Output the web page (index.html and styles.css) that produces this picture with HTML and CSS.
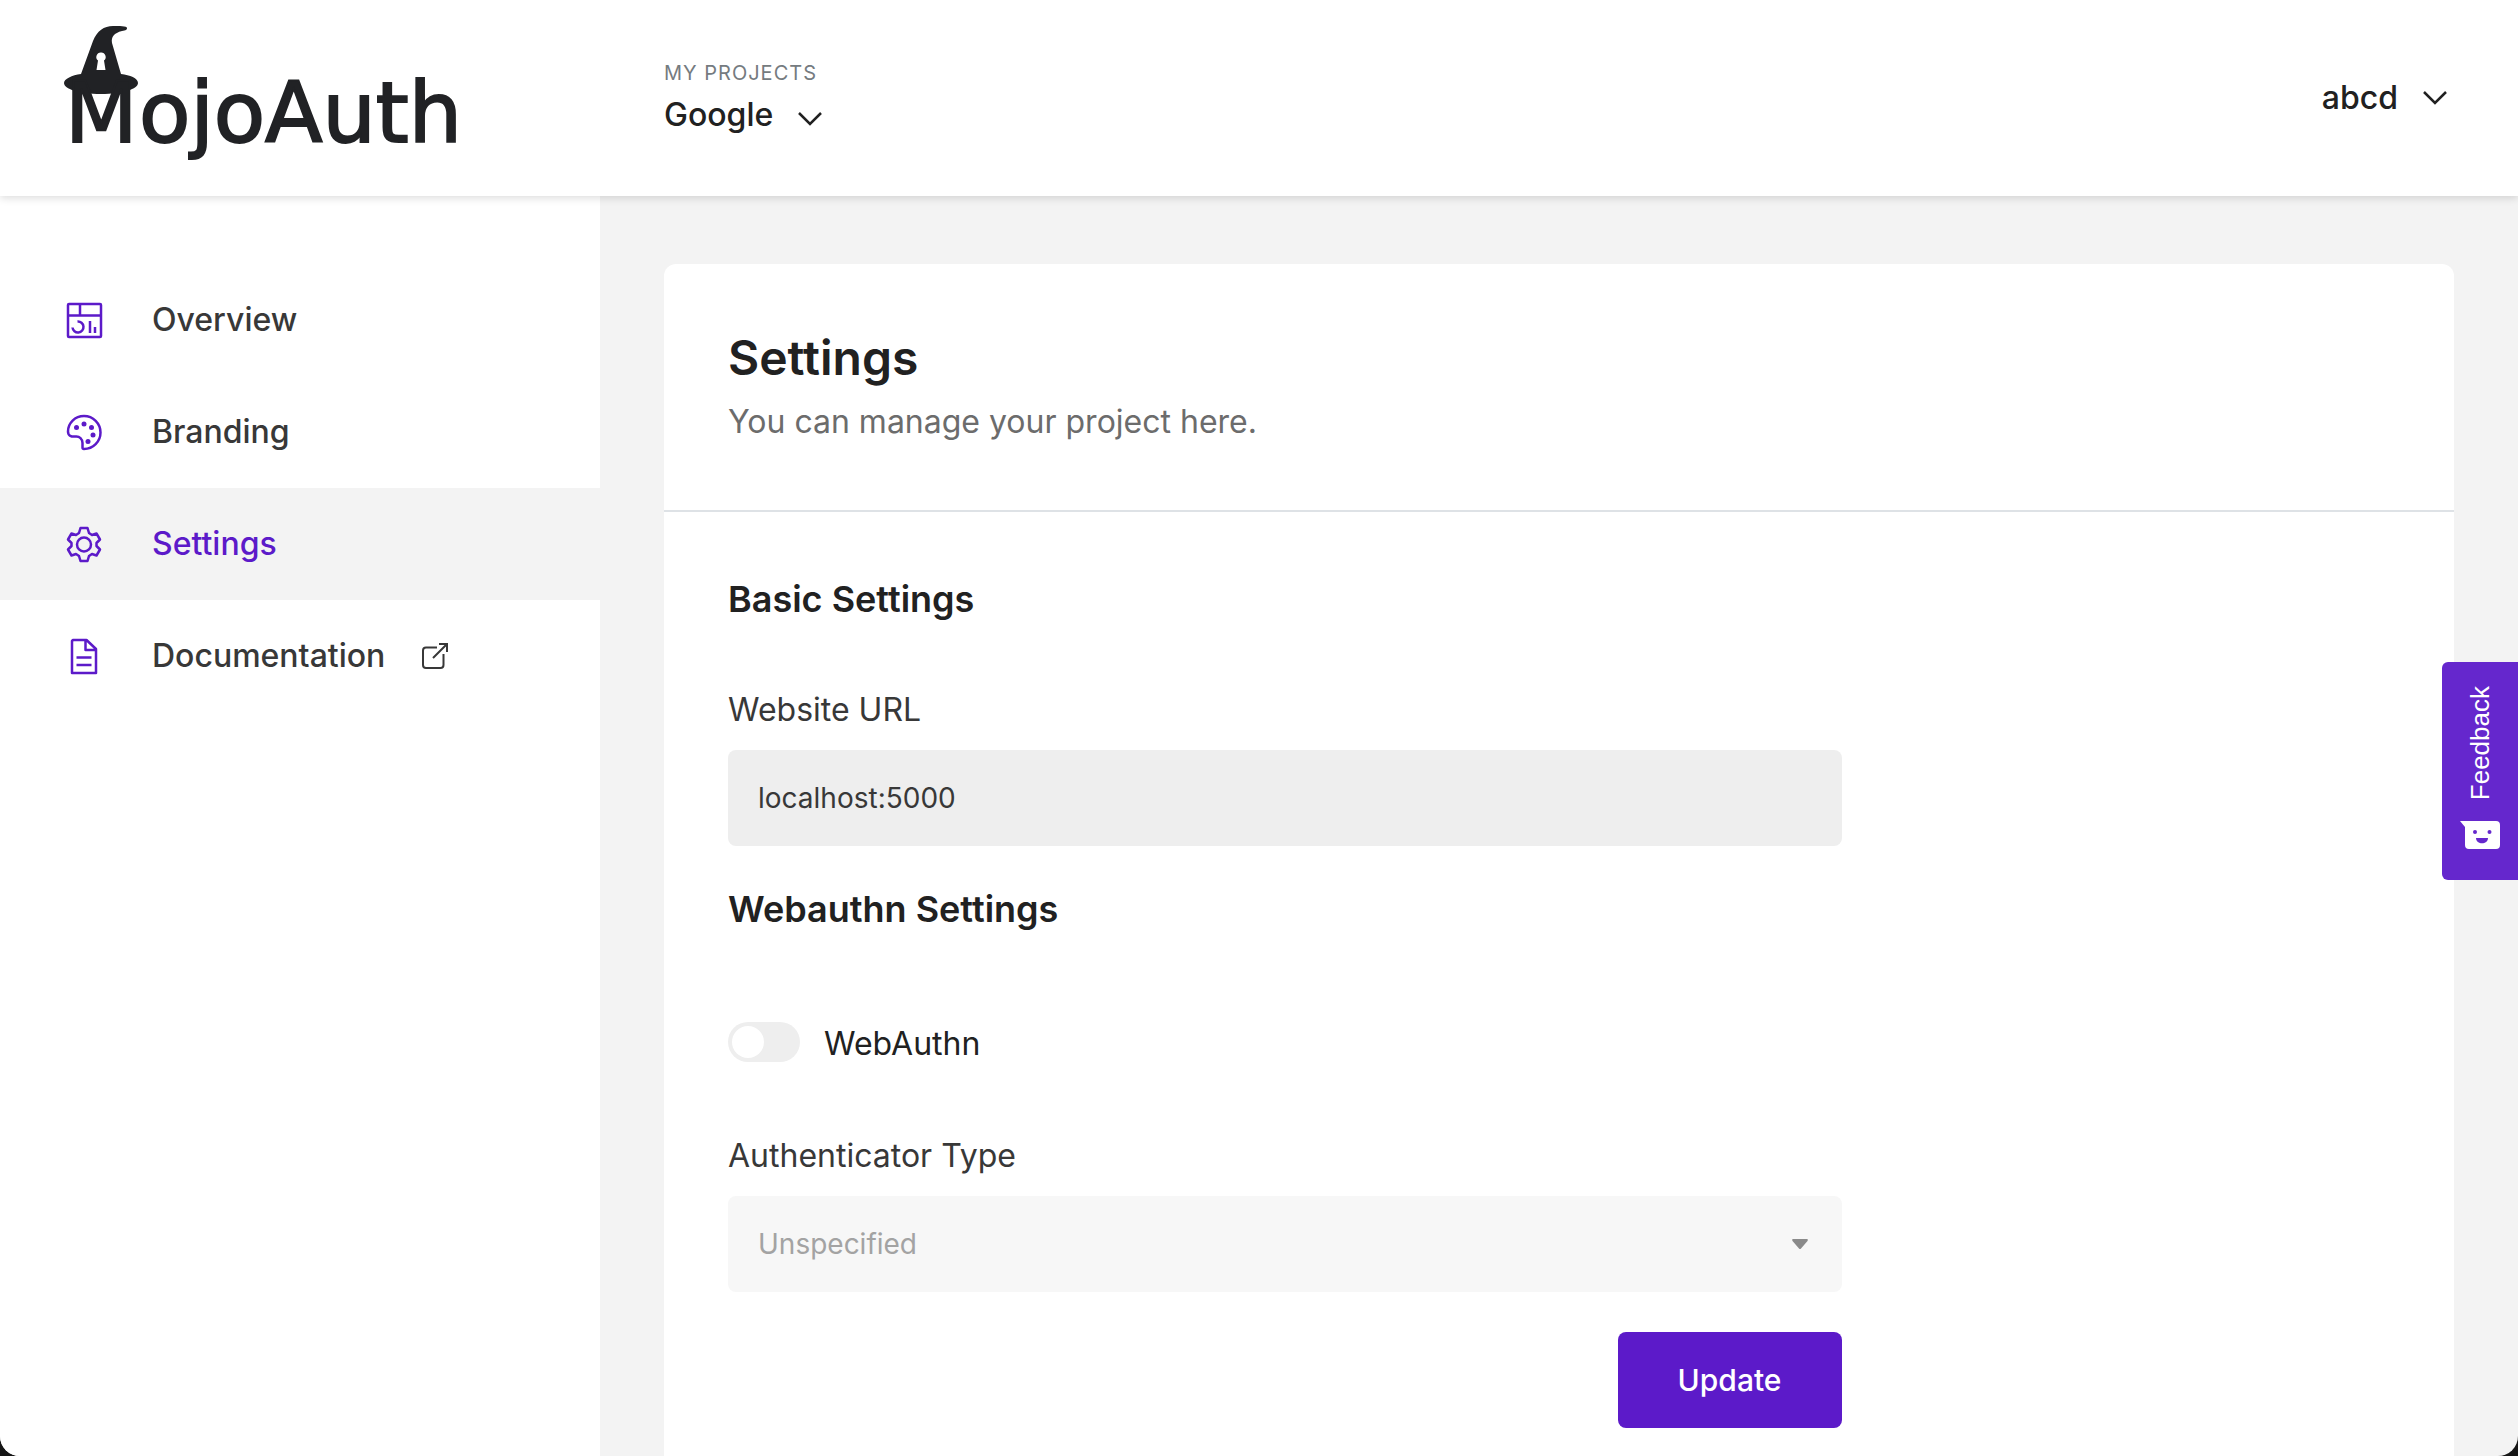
FILE: index.html
```html
<!DOCTYPE html>
<html lang="en">
<head>
<meta charset="utf-8">
<meta name="viewport" content="width=device-width, initial-scale=1">
<title>Settings - MojoAuth</title>
<link rel="stylesheet" href="styles.css">
</head>
<body>
<div class="app">
  <header class="topbar">
    <a class="logo" href="#" aria-label="MojoAuth">
      <svg width="420" height="144" viewBox="0 0 420 144" fill="currentColor">
        <path d="M17 48 29 15C33 5 40 0 49 0c6 0 14 0 14 2s-1 2-5 3c-8 2-11 6-10 12l9 31c9 1 17 4 17 9 0 6-15 11-37 11S0 63 0 57c0-4 8-8 17-9Z"/>
        <path class="logo-hole" d="M37 26.500a4.500 4.500 0 0 1 3 8l1.500 9.500h-9l1.500-9.500a4.500 4.500 0 0 1 3-8Z"/>
        <text class="logo-text" x="1" y="116">M</text>
        <text class="logo-text" x="75" y="116">ojoAuth</text>
      </svg>
    </a>
    <button class="project" type="button">
      <span class="project-caption">MY PROJECTS</span>
      <span class="project-name">Google
        <svg class="chevron" width="26" height="16" viewBox="0 0 26 16"><path d="m2 2 11 11L24 2"/></svg>
      </span>
    </button>
    <button class="account" type="button">abcd
      <svg class="chevron" width="26" height="16" viewBox="0 0 26 16"><path d="m2 2 11 11L24 2"/></svg>
    </button>
  </header>
  <div class="layout">
    <nav class="sidebar">
      <a class="nav-item" href="#">
        <svg class="nav-icon" viewBox="0 0 40 40"><rect x="4" y="4" width="33" height="33" rx="1"/><path d="M4 15.500h33M16 4v11.500M13.500 21.500a5.500 5.500 0 1 1-5 6M26 21v12M31 27v6"/></svg>
        Overview
      </a>
      <a class="nav-item" href="#">
        <svg class="nav-icon" viewBox="0 0 40 40"><path d="M20 4a16.500 16.500 0 0 1 0 33c-1 0-1.500-.500-1.500-1.500v-4.500c0-4-3-7-7-6.500-4 .500-7.500-.500-7.500-5C4 11 11 4 20 4Z"/><g class="dots"><circle cx="12.500" cy="15.500" r="2.500"/><circle cx="20" cy="12" r="2.500"/><circle cx="27.500" cy="15.500" r="2.500"/><circle cx="29" cy="23" r="2.500"/><circle cx="24" cy="29.500" r="2.500"/></g></svg>
        Branding
      </a>
      <a class="nav-item active" href="#" aria-current="page">
        <svg class="nav-icon" viewBox="0 0 40 40"><circle cx="20" cy="20.500" r="7"/><path d="M16.500 4h7l1.500 5 3 2 4.500-1.500 3.500 6-3.500 3.500v3l3.500 3.500-3.500 6-4.500-1.500-3 2-1.500 5h-7L15 32l-3-2-4.500 1.500-3.500-6L7.500 22v-3L4 15.500l3.500-6L12 11l3-2Z"/></svg>
        Settings
      </a>
      <a class="nav-item" href="#">
        <svg class="nav-icon" viewBox="0 0 40 40"><path d="M9 4h13.500L32 13v24H8V5ZM21.500 4v10H32M12.500 21.500h15M12.500 29h15"/></svg>
        Documentation
        <svg class="external" width="28" height="28" viewBox="0 0 28 28"><path d="M16 5.500H5a3 3 0 0 0-3 3V23a3 3 0 0 0 3 3h14.500a3 3 0 0 0 3-3V12M12 16 26 2M18 2h8v8"/></svg>
      </a>
    </nav>
    <main class="main">
      <section class="card">
        <div class="card-head">
          <h1>Settings</h1>
          <p>You can manage your project here.</p>
        </div>
        <div class="card-body">
          <form class="form">
            <h2>Basic Settings</h2>
            <div class="field">
              <label for="url">Website URL</label>
              <input class="control" id="url" type="text" value="localhost:5000" readonly>
            </div>
            <h2 class="next">Webauthn Settings</h2>
            <div class="switch">
              <input id="webauthn" type="checkbox" role="switch">
              <label for="webauthn">WebAuthn</label>
            </div>
            <div class="field">
              <label for="type">Authenticator Type</label>
              <div class="select">
                <select class="control" id="type" disabled><option>Unspecified</option></select>
                <svg class="caret" width="16" height="10" viewBox="0 0 16 10"><path d="M1 0h14c1 0 1 1 .500 2L9 9.500q-1 1-2 0L.500 2C0 1 0 0 1 0Z"/></svg>
              </div>
            </div>
            <button class="update" type="submit">Update</button>
          </form>
        </div>
      </section>
    </main>
  </div>
  <button class="feedback" type="button">
    <span>Feedback</span>
    <svg width="40" height="30" viewBox="0 0 40 30"><path fill="#fff" d="M0 1h36q4 0 4 4v20q0 4-4 4H9q-4 0-4-4V7Z"/><g fill="#6527cd"><circle cx="15" cy="12" r="2"/><circle cx="29.500" cy="12" r="2"/><path d="M16 18h12c0 7-12 7-12 0Z"/></g></svg>
  </button>
</div>
</body>
</html>
```
FILE: styles.css
```css
* { box-sizing: border-box; }

html { background: #161616; }

body {
  margin: 0;
  font-family: Inter, "Liberation Sans", sans-serif;
  font-size: 32px;
  line-height: 48px;
  color: #212121;
}

button, input, select { font: inherit; color: inherit; }
button { border: 0; background: none; padding: 0; cursor: pointer; }
h1, h2, p { margin: 0; }

.app {
  display: flex;
  flex-direction: column;
  min-height: 100vh;
  background: #f3f3f3;
  border-radius: 0 0 20px 20px;
  overflow: hidden;
}

/* Top bar */
.topbar {
  display: flex;
  align-items: center;
  height: 196px;
  padding: 0 70px 0 64px;
  background: #fff;
  box-shadow: 0 2px 8px rgba(0, 0, 0, 0.14);
  position: relative;
}
.logo { display: block; width: 600px; color: #212225; }
.logo svg { display: block; }
.logo-hole { fill: #fff; }
.logo-text { font: 84px "DejaVu Sans", sans-serif; stroke: currentColor; stroke-width: 2px; }
.project { display: flex; flex-direction: column; gap: 2px; text-align: left; }
.project-caption { font-size: 20px; line-height: 32px; letter-spacing: 1px; color: #757b80; }
.project-name, .account { display: flex; align-items: center; gap: 24px; font-weight: 500; }
.account { margin-left: auto; }
.chevron { fill: none; stroke: #212121; stroke-width: 2.5; }
.project .chevron { margin-top: 8px; }

/* Side navigation */
.layout { display: flex; flex: 1; }
.sidebar { flex: none; width: 600px; padding-top: 68px; background: #fff; }
.nav-item {
  display: flex;
  align-items: center;
  height: 112px;
  padding: 0 64px;
  font-weight: 500;
  color: #383838;
  text-decoration: none;
}
.nav-item.active { background: #f3f3f3; color: #5c1ac9; }
.nav-icon {
  width: 40px;
  height: 40px;
  margin-right: 48px;
  fill: none;
  stroke: #5c1ac9;
  stroke-width: 2.5;
  stroke-linejoin: round;
}
.dots { fill: #5c1ac9; stroke: none; }
.external { margin-left: 36px; fill: none; stroke: #383838; stroke-width: 2; }

/* Settings card */
.main { display: flex; flex: 1; padding: 68px 64px 0; }
.card { flex: 1; background: #fff; border-radius: 12px 12px 0 0; }
.card-head {
  display: grid;
  gap: 10px;
  padding: 64px;
  border-bottom: 2px solid #dee2e6;
}
h1 { font-size: 48px; line-height: 60px; font-weight: 600; }
.card-head p { color: #6c6c6c; }
.card-body { padding: 64px 64px 28px; }
.form { display: flex; flex-direction: column; width: 67%; }
h2 { margin-bottom: 64px; font-size: 36px; line-height: 46px; font-weight: 600; }
h2.next { margin: 40px 0 88px; }
.field { display: grid; gap: 16px; color: #383838; }
.control {
  width: 100%;
  height: 96px;
  padding: 0 30px;
  border: 0;
  border-radius: 8px;
  background: #eee;
  font-size: 28px;
  appearance: none;
}
.control:disabled { background: #f7f7f7; color: #a3a3a3; opacity: 1; }
.select { display: flex; align-items: center; }
.caret { margin-left: -50px; fill: #8a8a8a; }
.switch { display: flex; align-items: flex-start; gap: 24px; margin-bottom: 64px; }
.switch input {
  appearance: none;
  width: 72px;
  height: 40px;
  margin: 2px 0;
  padding: 4px;
  border-radius: 20px;
  background: #eee;
}
.switch input::before {
  content: "";
  display: block;
  width: 32px;
  height: 32px;
  border-radius: 50%;
  background: #fff;
}
.update {
  align-self: flex-end;
  width: 224px;
  height: 96px;
  margin-top: 40px;
  border-radius: 8px;
  background: #5c1ac9;
  color: #fff;
  font-size: 30px;
  font-weight: 500;
}

/* Feedback tab, pinned over the page edge */
.feedback {
  position: fixed;
  right: 0;
  top: 662px;
  display: flex;
  flex-direction: column;
  align-items: center;
  gap: 20px;
  width: 76px;
  height: 218px;
  padding: 24px 0;
  border-radius: 6px 0 0 6px;
  background: #6527cd;
  color: #fff;
  font: 26px/32px "Liberation Sans", Arial, sans-serif;
}
.feedback span { writing-mode: vertical-rl; transform: rotate(180deg); }
```
